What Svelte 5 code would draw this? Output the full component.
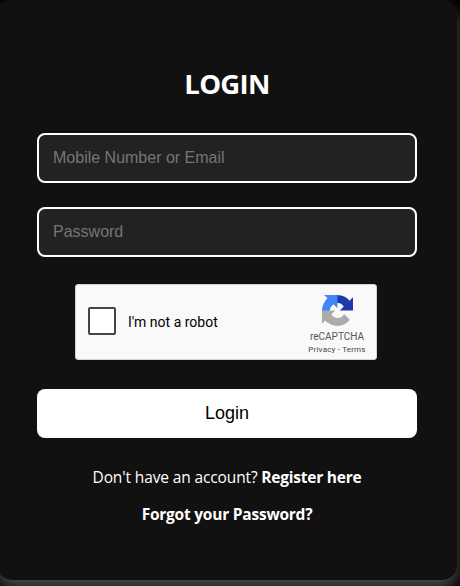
<script>
  let account = $state('');
  let password = $state('');
</script>

<main>
  <form class="card" onsubmit={(e) => e.preventDefault()}>
    <h1><span>LOGIN</span></h1>
    <input type="text" placeholder="Mobile Number or Email" bind:value={account} />
    <input type="password" placeholder="Password" bind:value={password} />

    <div class="captcha">
      <span class="check"></span>
      <span class="label">I'm not a robot</span>
      <div class="brand">
        <svg viewBox="0 0 64 64" width="31" height="31" aria-hidden="true">
          <path fill="#1c3aa9" d="M64 31.955l-.033-1.37V4.687l-7.16 7.16C50.948 4.674 42.033.093 32.05.093c-10.4 0-19.622 4.96-25.458 12.64l11.736 11.86a15.55 15.55 0 0 1 4.754-5.334c2.05-1.6 4.952-2.906 8.968-2.906.485 0 .86.057 1.135.163 4.976.393 9.288 3.14 11.828 7.124l-8.307 8.307L64 31.953" />
          <path fill="#4285f4" d="M31.862.094l-1.37.033H4.594l7.16 7.16C4.58 13.147 0 22.06 0 32.046c0 10.4 4.96 19.622 12.64 25.458L24.5 45.768a15.55 15.55 0 0 1-5.334-4.754c-1.6-2.05-2.906-4.952-2.906-8.968 0-.485.057-.86.163-1.135.393-4.976 3.14-9.288 7.124-11.828l8.307 8.307L31.86.095" />
          <path fill="#ababab" d="M.001 32.045l.033 1.37v25.898l7.16-7.16c5.86 7.173 14.774 11.754 24.76 11.754 10.4 0 19.622-4.96 25.458-12.64l-11.736-11.86a15.55 15.55 0 0 1-4.754 5.334c-2.05 1.6-4.952 2.906-8.968 2.906-.485 0-.86-.057-1.135-.163-4.976-.393-9.288-3.14-11.828-7.124l8.307-8.307c-10.522.04-22.4.066-27.295-.005" />
        </svg>
        <span class="name">reCAPTCHA</span>
        <span class="terms">Privacy - Terms</span>
      </div>
    </div>

    <button type="submit">Login</button>
    <p class="register">Don't have an account? <b>Register here</b></p>
    <p class="forgot"><b>Forgot your Password?</b></p>
  </form>
</main>

<style>
  :global(body) {
    margin: 0;
    background: #000;
  }
  main {
    height: 586px;
    overflow: hidden;
  }
  .card {
    box-sizing: border-box;
    width: 460px;
    height: 580px;
    margin-left: -3px;
    padding: 64px 40px 0;
    border-radius: 15px;
    background: #111;
    box-shadow: 0 8px 16px rgba(255, 255, 255, 0.3);
    color: #fff;
    font-family: 'Open Sans', 'Noto Sans', sans-serif;
    display: flex;
    flex-direction: column;
  }
  h1 {
    margin: 0 0 29px;
    height: 40px;
    line-height: 40px;
    font-size: 27.5px;
    font-weight: 700;
    text-align: center;
    letter-spacing: -0.7px;
  }
  input {
    box-sizing: border-box;
    width: 380px;
    height: 50px;
    margin: 0 0 24px;
    padding: 0 14px;
    border: 2px solid #fff;
    border-radius: 8px;
    background: #222;
    color: #fff;
    font: 16px 'Liberation Sans', Arial, sans-serif;
    outline: none;
  }
  input::placeholder {
    color: #757575;
    opacity: 1;
  }
  .captcha {
    box-sizing: border-box;
    align-self: flex-start;
    width: 302px;
    height: 76px;
    margin: 3px 0 29px 38px;
    padding-left: 12px;
    border: 1px solid #d3d3d3;
    border-radius: 3px;
    background: #f9f9f9;
    color: #000;
    font-family: Roboto, sans-serif;
    display: flex;
    align-items: center;
  }
  .check {
    box-sizing: border-box;
    width: 28px;
    height: 28px;
    margin-bottom: 2px;
    border: 2px solid #444;
    border-radius: 2px;
    background: #fff;
  }
  .label {
    margin-left: 12px;
    font-size: 14px;
    line-height: 17px;
  }
  .brand {
    box-sizing: border-box;
    width: 58px;
    height: 74px;
    margin: 0 10px 0 auto;
    padding-top: 10px;
    display: flex;
    flex-direction: column;
    align-items: center;
    color: #555;
    white-space: nowrap;
  }
  .name {
    margin-top: 5px;
    font-size: 10px;
    line-height: 12px;
  }
  .terms {
    margin-top: 2px;
    font-size: 8px;
    line-height: 10px;
    letter-spacing: 0.2px;
    color: #444;
  }
  button {
    height: 49px;
    flex: none;
    margin: 0;
    padding: 0 0 1px;
    border: 0;
    border-radius: 8px;
    background: #fff;
    color: #000;
    font: 18px 'Liberation Sans', Arial, sans-serif;
  }
  p {
    margin: 0;
    height: 22px;
    line-height: 22px;
    font-size: 15.5px;
    text-align: center;
    white-space: nowrap;
    letter-spacing: -0.13px;
  }
  .register {
    margin: 28px 0 15px;
  }
  b {
    font-weight: 700;
    letter-spacing: -0.23px;
  }
</style>
